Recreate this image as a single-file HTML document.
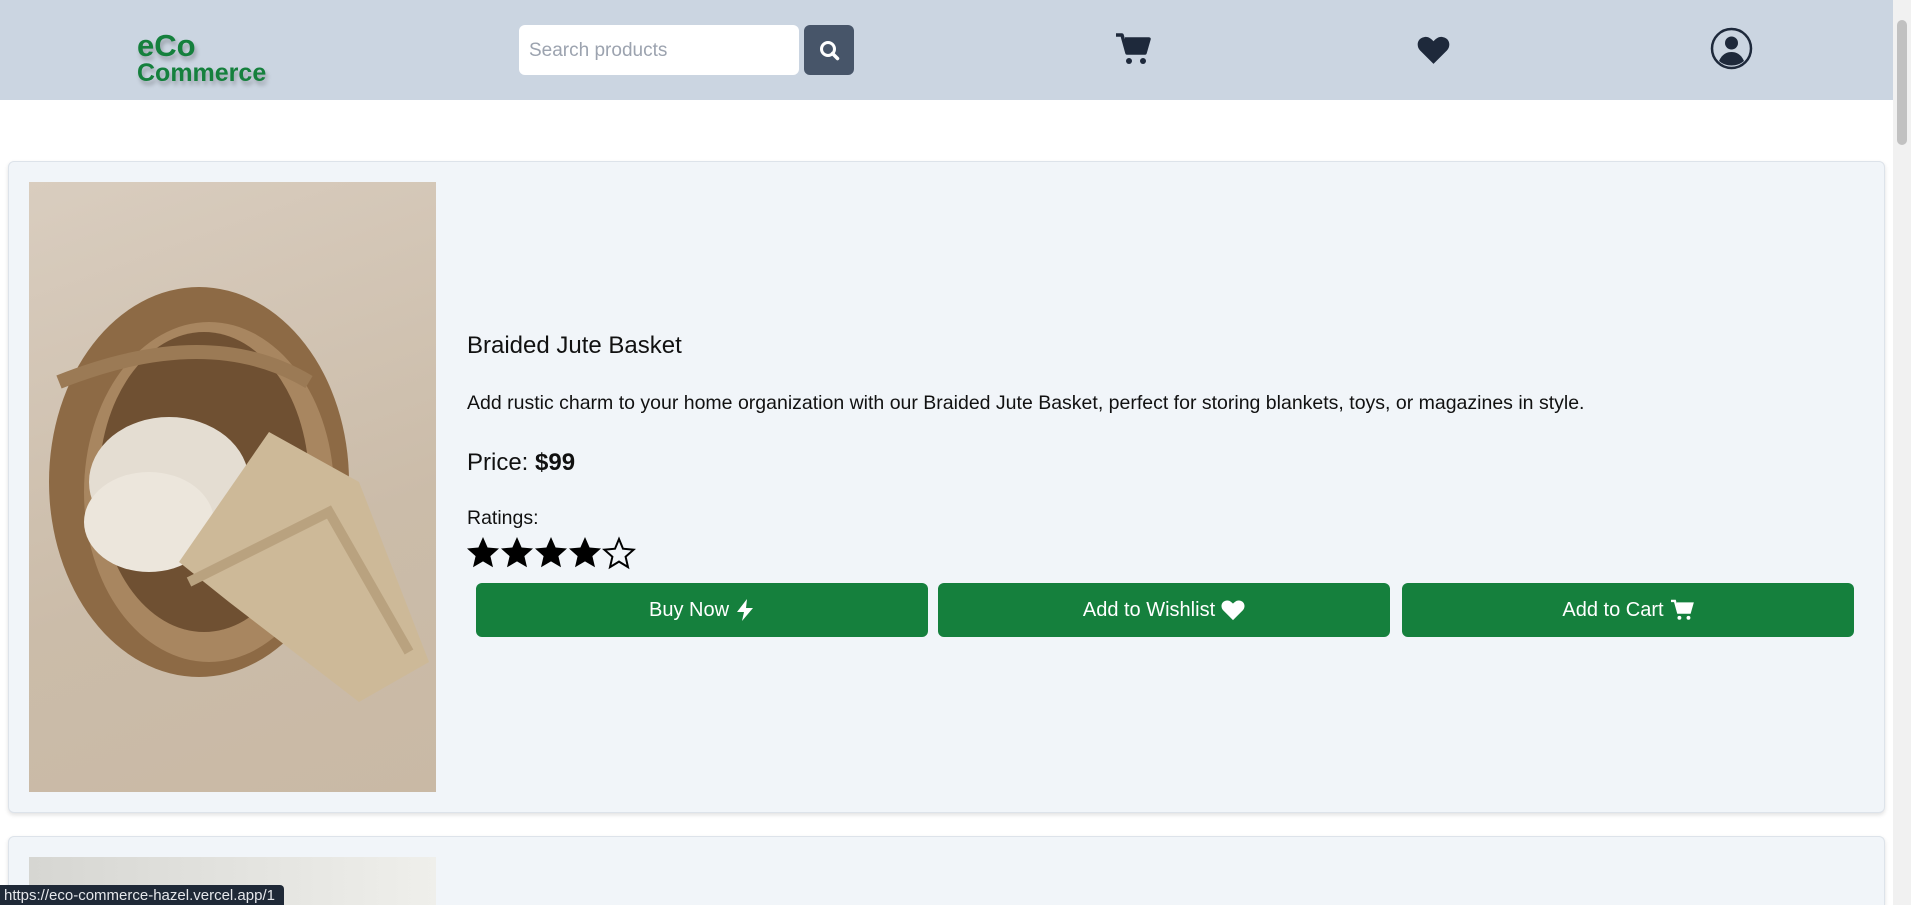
<!DOCTYPE html>
<html style="height:905px;overflow:hidden"><head><meta charset="utf-8"><style>
*{box-sizing:border-box;margin:0;padding:0}
body{width:1911px;height:905px;overflow:hidden;background:#fff;font-family:"Liberation Sans",sans-serif;position:relative}
.hdr{position:absolute;left:0;top:0;width:1893px;height:100px;background:#cbd5e1}
.logo{position:absolute;left:137px;top:30px;color:#15803d;font-weight:bold;text-shadow:2px 4px 4px rgba(0,0,0,.25);line-height:1}
.logo .a{font-size:31px}.logo .b{font-size:25px;display:block;margin-top:0}
.search{position:absolute;left:519px;top:25px;width:280px;height:50px;background:#fff;border-radius:6px;font-size:19px;color:#9ca3af;padding:15px 10px}
.sbtn{position:absolute;left:804px;top:25px;width:50px;height:50px;background:#475569;border-radius:6px}
.scroll{position:absolute;right:0;top:0;width:18px;height:905px;background:#f1f1f1}
.scroll div{position:absolute;left:4px;top:20px;width:10px;height:125px;background:#c1c1c1;border-radius:5px}
.card{position:absolute;left:8px;width:1877px;background:#f1f5f9;border:1px solid #dde3ea;border-radius:6px;box-shadow:0 2px 4px rgba(0,0,0,.12);overflow:hidden}
.img{position:absolute;left:20px;top:20px;width:407px;height:610px;overflow:hidden;background:linear-gradient(160deg,#d9cdbf,#cbbca9 60%,#c9b9a5)}
.t{position:absolute;left:458px;color:#111;white-space:nowrap}
.btn{position:absolute;top:583px;height:54px;width:452px;background:#15803d;border-radius:6px;color:#fff;font-size:20px;display:flex;align-items:center;justify-content:center;gap:6px}
.status{position:absolute;left:0;top:885px;width:284px;height:20px;background:#1f2937;color:#e5e7eb;font-size:15px;padding:2px 4px;border-top-right-radius:4px}
</style></head><body>
<div class="hdr">
<div class="logo"><span class="a">eCo</span><span class="b">Commerce</span></div>
<div class="search">Search products</div>
<div class="sbtn"><svg width="50" height="50" viewBox="0 0 50 50"><circle cx="24" cy="24" r="6.5" fill="none" stroke="#fff" stroke-width="3"/><path d="M28.5 28.5l5 5" stroke="#fff" stroke-width="3.5" stroke-linecap="round"/></svg></div>
<svg style="position:absolute;left:1115px;top:32px" width="36" height="34" viewBox="0 0 36 34"><path d="M1 3h6l5 18h18l4-14H10" fill="none" stroke="#1e293b" stroke-width="3.5" stroke-linejoin="round"/><path d="M10 7h24l-4 14H12z" fill="#1e293b"/><circle cx="14" cy="29" r="3" fill="#1e293b"/><circle cx="28" cy="29" r="3" fill="#1e293b"/></svg>
<svg style="position:absolute;left:1417px;top:35px" width="33" height="30" viewBox="0 0 32 29"><path d="M16 28L3 15C-1 11 0 3 7 2c4-1 7 2 9 4 2-2 5-5 9-4 7 1 8 9 4 13z" fill="#1e293b"/></svg>
<svg style="position:absolute;left:1710px;top:27px" width="43" height="43" viewBox="0 0 43 43"><circle cx="21.5" cy="21.5" r="19.5" fill="none" stroke="#1e293b" stroke-width="2.5"/><circle cx="21.5" cy="16" r="6.5" fill="#1e293b"/><path d="M9 34c3-7 8-9 12.5-9s9.5 2 12.5 9c-3.5 3-8 4.5-12.5 4.5S12.5 37 9 34z" fill="#1e293b"/></svg>
</div>
<div class="card" style="top:161px;height:652px">
<div class="img"><svg width="407" height="610" viewBox="0 0 407 610">
<ellipse cx="170" cy="300" rx="150" ry="195" fill="#8d6a45"/>
<ellipse cx="180" cy="310" rx="125" ry="170" fill="#a88660"/>
<ellipse cx="175" cy="300" rx="105" ry="150" fill="#6f5032"/>
<path d="M30 200 Q180 140 280 200" stroke="#9b7a55" stroke-width="14" fill="none"/>
<ellipse cx="140" cy="300" rx="80" ry="65" fill="#e4ddd2"/>
<ellipse cx="120" cy="340" rx="65" ry="50" fill="#ece6dc"/>
<path d="M150 380 L240 250 L330 300 L400 480 L330 520 L200 420 Z" fill="#cdb998"/>
<path d="M160 400 L300 330 L380 470" stroke="#b9a27f" stroke-width="10" fill="none"/>
</svg></div>
<div class="t" style="top:170px;font-size:24px">Braided Jute Basket</div>
<div class="t" style="top:230px;font-size:19.5px">Add rustic charm to your home organization with our Braided Jute Basket, perfect for storing blankets, toys, or magazines in style.</div>
<div class="t" style="top:287px;font-size:24px">Price: <b>$99</b></div>
<div class="t" style="top:345px;font-size:19.5px">Ratings:</div>
<svg style="position:absolute;left:457px;top:374px" width="170" height="34" viewBox="0 0 170 34">
<g id="s"><path d="M17 1l4.6 10.5 11.4 1-8.6 7.6 2.6 11.2L17 25.4 7 31.3l2.6-11.2L1 12.5l11.4-1z" fill="#000"/></g>
<use href="#s" x="34"/><use href="#s" x="68"/><use href="#s" x="102"/>
<path transform="translate(136 0)" d="M17 3l4 9.7 10.6 1-8 7 2.4 10.4L17 25.6l-9 5.5 2.4-10.4-8-7 10.6-1z" fill="none" stroke="#000" stroke-width="2"/></svg>
<div class="btn" style="left:467px;top:421px">Buy Now <svg width="20" height="22" viewBox="0 0 20 22"><path d="M12 0L2 13h7l-2 9 11-13h-7z" fill="#fff"/></svg></div>
<div class="btn" style="left:929px;top:421px">Add to Wishlist <svg width="24" height="22" viewBox="0 0 32 29"><path d="M16 28L3 15C-1 11 0 3 7 2c4-1 7 2 9 4 2-2 5-5 9-4 7 1 8 9 4 13z" fill="#fff"/></svg></div>
<div class="btn" style="left:1393px;top:421px">Add to Cart <svg width="24" height="22" viewBox="0 0 36 34"><path d="M1 3h6l5 18h18l4-14H10" fill="none" stroke="#fff" stroke-width="3.5"/><path d="M10 7h24l-4 14H12z" fill="#fff"/><circle cx="14" cy="29" r="3" fill="#fff"/><circle cx="28" cy="29" r="3" fill="#fff"/></svg></div>
</div>
<div class="card" style="top:836px;height:69px;border-bottom:none;border-radius:6px 6px 0 0"><div class="img" style="top:20px;height:60px;background:linear-gradient(90deg,#d6d6d2,#efefeb)"></div></div>
<div class="scroll"><div></div></div>
<div class="status">https://eco-commerce-hazel.vercel.app/1</div>
</body></html>
